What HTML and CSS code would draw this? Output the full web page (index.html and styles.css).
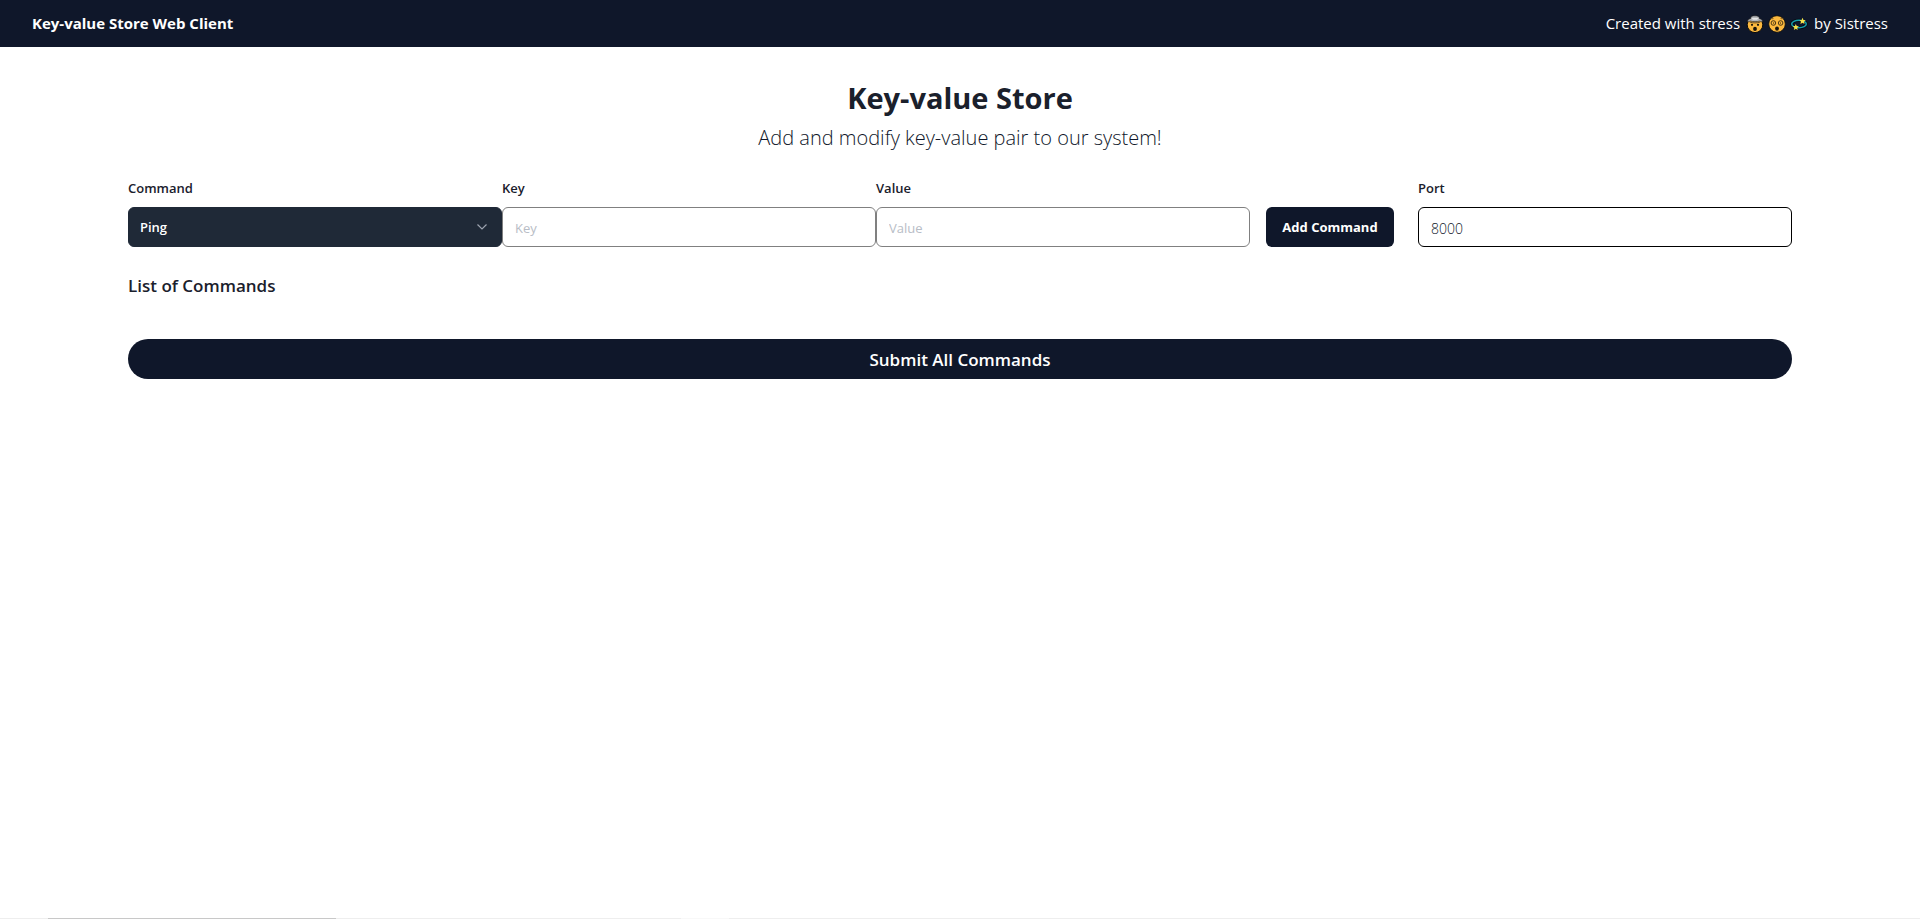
FILE: index.html
```html
<!DOCTYPE html>
<html lang="en">
<head>
<meta charset="utf-8">
<meta name="viewport" content="width=device-width, initial-scale=1">
<title>Key-value Store Web Client</title>
<link rel="stylesheet" href="styles.css">
</head>
<body>
<header class="navbar">
  <span class="brand">Key-value Store Web Client</span>
  <p class="credit">
    <span>Created with stress</span>
    <span class="emojis">
      <svg class="emoji" viewBox="0 0 18 18" role="img" aria-label="exploding head">
        <circle cx="9" cy="9.800" r="7.800" fill="#fcb93f" stroke="#0a0a0a" stroke-width="1"/>
        <path d="M1.200 6.600C2 4 4 3.800 4.600 3.600 4.400 1.200 7 .6 9 .8c2.400-.2 4.600.6 4.400 2.800.8.2 2.600.6 3.400 3-1.200.4-2 0-2.800-.6-3 .9-7 .9-10 0-.8.6-1.600 1-2.800.6Z" fill="#b4b6b9" stroke="#111" stroke-width=".6"/>
        <path d="M5.500 3h7L11 4.800H7Z" fill="#e4e4e4"/>
        <path d="M3.600 7c3 1.200 7.800 1.200 10.800 0" fill="none" stroke="#4a3520" stroke-width=".8"/>
        <circle cx="6" cy="9.800" r="1.100" fill="#17130c"/><circle cx="12" cy="9.800" r="1.100" fill="#17130c"/>
        <ellipse cx="9" cy="13.900" rx="1.900" ry="2.100" fill="#17130c"/>
      </svg>
      <svg class="emoji" viewBox="0 0 18 18" role="img" aria-label="face with spiral eyes">
        <circle cx="9" cy="9" r="8.300" fill="#fcb93f" stroke="#0a0a0a" stroke-width=".8"/>
        <path d="M3.800 4 5.600 3.200m6.800 0 1.800.8" stroke="#6b4a18" stroke-width=".8" fill="none"/>
        <circle cx="5.400" cy="8" r="2.300" fill="none" stroke="#3a2a10" stroke-width=".9"/>
        <circle cx="12.600" cy="8" r="2.300" fill="none" stroke="#3a2a10" stroke-width=".9"/>
        <path d="M5 8.800c1.200 0 1.200-1.500.2-1.500M13 8.800c-1.200 0-1.200-1.500-.2-1.500" fill="none" stroke="#3a2a10" stroke-width=".8"/>
        <ellipse cx="9" cy="13.600" rx="1.900" ry="2.200" fill="#17130c"/>
      </svg>
      <svg class="emoji" viewBox="0 0 18 18" role="img" aria-label="dizzy">
        <ellipse cx="9" cy="9" rx="7.300" ry="3.700" fill="none" stroke="#050a10" stroke-width="3"/>
        <ellipse cx="9" cy="9" rx="7.300" ry="3.700" fill="none" stroke="#159eae" stroke-width="1.500"/>
        <path d="m12.500 2.700 1 2.200 2.300.2-1.800 1.500.5 2.300-2-1.200-2.100 1.200.6-2.300-1.700-1.500 2.300-.2Z" fill="#f5e04a"/>
        <path d="m5.800 9 .9 2.100 2.200.2-1.700 1.400.5 2.200-1.900-1.100-2 1.100.6-2.200-1.700-1.400 2.200-.2Z" fill="#f5e04a"/>
      </svg>
    </span>
    <span>by Sistress</span>
  </p>
</header>
<main class="page">
  <div class="intro">
    <h1 class="title">Key-value Store</h1>
    <p class="subtitle">Add and modify key-value pair to our system!</p>
  </div>
  <form class="command-form">
    <div class="field">
      <label class="label" for="command">Command</label>
      <div class="select-wrap">
        <select class="control select" id="command">
          <option>Ping</option>
          <option>Get</option>
          <option>Set</option>
          <option>Append</option>
          <option>Delete</option>
        </select>
        <svg class="chevron" viewBox="0 0 12 12" aria-hidden="true"><path d="M1.500 3.500 6 8l4.500-4.500" fill="none" stroke="currentColor" stroke-width="1.200"/></svg>
      </div>
    </div>
    <div class="field">
      <label class="label" for="key">Key</label>
      <input class="control input" id="key" type="text" placeholder="Key">
    </div>
    <div class="field">
      <label class="label" for="value">Value</label>
      <input class="control input" id="value" type="text" placeholder="Value">
    </div>
    <button class="add-button" type="button">Add Command</button>
    <div class="field">
      <label class="label" for="port">Port</label>
      <input class="control input port" id="port" type="text" value="8000">
    </div>
  </form>
  <h2 class="list-title">List of Commands</h2>
  <button class="submit-button" type="button">Submit All Commands</button>
</main>
<div class="bottom-rule"></div>
</body>
</html>
```
FILE: styles.css
```css
* {
  box-sizing: border-box;
}

body {
  margin: 0;
  min-height: 100vh;
  display: flex;
  flex-direction: column;
  background: #fff;
  color: #1a202c;
  font-family: "Segoe UI", "Open Sans", "Noto Sans", sans-serif;
  font-size: 15px;
  line-height: 23px;
}

h1, h2, p {
  margin: 0;
}

button, input, select {
  margin: 0;
  font-family: inherit;
}

.navbar {
  display: flex;
  justify-content: space-between;
  align-items: center;
  padding: 12px 32px;
  background: #0f172a;
  color: #fff;
}

.brand {
  font-weight: 700;
}

.credit {
  display: flex;
  align-items: center;
  gap: 6px;
}

.emojis {
  display: flex;
  gap: 4px;
}

.emoji {
  width: 18px;
  height: 18px;
}

.page {
  flex: 1;
  display: flex;
  flex-direction: column;
  padding: 32px 128px;
}

.intro {
  text-align: center;
}

.title {
  font-size: 29px;
  line-height: 38px;
  font-weight: 700;
}

.subtitle {
  font-size: 20px;
  line-height: 42px;
  font-weight: 300;
  color: #0f172a;
}

.command-form {
  display: flex;
  align-items: flex-end;
  margin-top: 18px;
}

.field {
  flex: 1;
  display: flex;
  flex-direction: column;
  gap: 8px;
}

.label {
  font-size: 13px;
  line-height: 22px;
  font-weight: 600;
}

.control {
  width: 100%;
  height: 40px;
  padding: 2px 12px 0;
  border: 1px solid #808080;
  border-radius: 6px;
  font-size: 13px;
}

.input {
  background: #fff;
  color: #374151;
}

.input::placeholder {
  color: #b8bdc6;
  opacity: 1;
}

.port {
  border-color: #000;
  color: #0f172a;
  font-size: 14px;
  font-weight: 300;
}

.select-wrap {
  position: relative;
}

.select {
  display: block;
  appearance: none;
  padding: 0 32px 0 11px;
  border-color: #1f2937;
  background: #1f2937;
  color: #fff;
  font-weight: 600;
}

.chevron {
  position: absolute;
  top: 14px;
  right: 14px;
  width: 12px;
  height: 12px;
  color: #9ca3af;
  pointer-events: none;
}

.add-button {
  min-width: 128px;
  height: 40px;
  margin: 0 24px 0 16px;
  padding: 0 16px;
  border: 0;
  border-radius: 6px;
  background: #0f172a;
  color: #fff;
  font-size: 13px;
  font-weight: 700;
}

.list-title {
  margin-top: 24px;
  font-size: 17px;
  line-height: 30px;
  font-weight: 600;
}

.submit-button {
  height: 40px;
  margin-top: 38px;
  border: 0;
  border-radius: 20px;
  background: #0f172a;
  color: #fff;
  font-size: 17px;
  font-weight: 600;
}

.bottom-rule {
  height: 1px;
  background: linear-gradient(90deg, #eee 48px, #c8c8c8 48px 336px, #eee 336px 681px, #f8f8f8 681px 729px, #eee 729px);
}
```
